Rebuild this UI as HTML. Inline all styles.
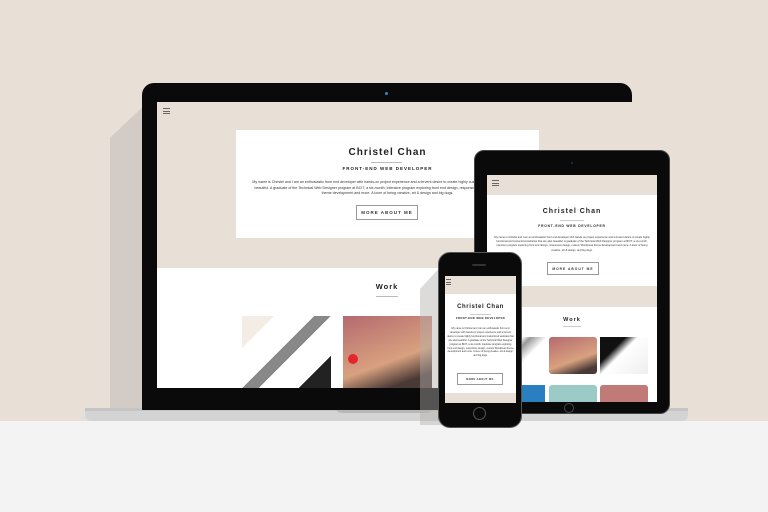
<!DOCTYPE html>
<html><head><meta charset="utf-8"><style>
*{margin:0;padding:0;box-sizing:border-box}
body{width:768px;height:512px;overflow:hidden;position:relative;background:#e8dfd7;font-family:"Liberation Sans",sans-serif;color:#222}
.a{position:absolute}
.t{text-align:center;white-space:nowrap}
.p{color:#333;text-align:center}
.btn{position:absolute;border:1px solid #999;background:#fff;font-weight:bold;letter-spacing:1px;color:#333;display:flex;align-items:center;justify-content:center}
.ham{position:absolute;width:7px;height:6px;border-top:1px solid #666;border-bottom:1px solid #666}
.ham:after{content:"";position:absolute;left:0;right:0;top:1.5px;border-top:1px solid #666}
</style></head><body>
<div class="a" style="left:0;top:421px;width:768px;height:91px;background:#f3f3f3"></div>
<div class="a" style="left:110px;top:100px;width:40px;height:315px;background:#d3ccc6;clip-path:polygon(100% 0,100% 100%,0 100%,0 12%)"></div>
<div class="a" style="left:85px;top:408px;width:603px;height:13px;background:#d4d4d4;border-radius:0 0 6px 6px"></div>
<div class="a" style="left:85px;top:408px;width:603px;height:3px;background:#c4c4c4"></div>
<div class="a" style="left:336px;top:408px;width:96px;height:5px;background:#b8b8b8;border-radius:0 0 5px 5px"></div>
<div class="a" style="left:142px;top:83px;width:490px;height:327px;background:#0a0a0a;border-radius:12px 12px 0 0"></div>
<div class="a" style="left:385px;top:92px;width:3px;height:3px;border-radius:50%;background:#2a8ad0"></div>
<div class="a" style="left:157px;top:102px;width:480px;height:286px;background:#fff;overflow:hidden">
  <div class="a" style="left:0;top:0;width:480px;height:166px;background:#e8dfd7"></div>
  <div class="ham" style="left:6px;top:6px"></div>
  <div class="a" style="left:79px;top:28px;width:303px;height:108px;background:#fff">
    <div class="a t" style="left:0;width:303px;top:17px;font-size:10px;font-weight:bold;letter-spacing:1px">Christel Chan</div>
    <div class="a" style="left:135px;top:32px;width:31px;height:1px;background:#bbb"></div>
    <div class="a t" style="left:0;width:303px;top:36px;font-size:4.5px;font-weight:bold;letter-spacing:1px">FRONT-END WEB DEVELOPER</div>
    <div class="a p" style="left:15px;width:273px;top:50px;font-size:3.6px;line-height:5.5px">My name is Christel and I am an enthusiastic front end developer with hands-on project experience and a fervent desire to create highly customized websites that are also beautiful. A graduate of the Technical Web Designer program at BCIT, a six-month, intensive program exploring front end design, responsive design, custom Wordpress theme development and more. A lover of being creative, art &amp; design and big dogs.</div>
    <div class="btn" style="left:120px;top:75px;width:62px;height:15px;font-size:4.5px">MORE ABOUT ME</div>
  </div>
  <div class="a t" style="left:180px;width:100px;top:180px;font-size:7.5px;font-weight:bold;letter-spacing:1px">Work</div>
  <div class="a" style="left:219px;top:194px;width:22px;height:1px;background:#bbb"></div>
  <div class="a" style="left:85px;top:214px;width:89px;height:72px;background:linear-gradient(135deg,#f4ede6 0 20%,#fff 20% 45%,#888 45% 55%,#fff 55% 80%,#222 80%)"></div>
  <div class="a" style="left:186px;top:214px;width:89px;height:72px;background:linear-gradient(160deg,#b56a6f,#d8a17f 60%,#4a3a36 85%)"></div>
  <div class="a" style="left:191px;top:252px;width:10px;height:10px;border-radius:50%;background:#e6262d"></div>
</div>
<div class="a" style="left:474px;top:150px;width:196px;height:264px;background:#0a0a0a;border-radius:10px;border:1px solid #444"></div>
<div class="a" style="left:571px;top:162px;width:2px;height:2px;background:#234;border-radius:50%"></div>
<div class="a" style="left:564px;top:403px;width:10px;height:10px;border:1px solid #444;border-radius:50%"></div>
<div class="a" style="left:487px;top:175px;width:170px;height:227px;background:#fff;overflow:hidden">
  <div class="a" style="left:0;top:0;width:170px;height:20px;background:#e8dfd7"></div>
  <div class="ham" style="left:5px;top:5px"></div>
  <div class="a t" style="left:0;width:170px;top:33px;font-size:7px;font-weight:bold;letter-spacing:1px">Christel Chan</div>
  <div class="a" style="left:73px;top:45px;width:24px;height:1px;background:#ccc"></div>
  <div class="a t" style="left:0;width:170px;top:49px;font-size:3.3px;font-weight:bold;letter-spacing:.8px">FRONT-END WEB DEVELOPER</div>
  <div class="a p" style="left:5px;width:160px;top:61px;font-size:2.6px;line-height:4.2px">My name is Christel and I am an enthusiastic front end developer with hands-on project experience and a fervent desire to create highly functional and customized websites that are also beautiful. A graduate of the Technical Web Designer program at BCIT, a six-month, intensive program exploring front end design, responsive design, custom Wordpress theme development and more. A lover of being creative, art &amp; design, and big dogs.</div>
  <div class="btn" style="left:60px;top:87px;width:52px;height:13px;font-size:3.3px">MORE ABOUT ME</div>
  <div class="a" style="left:0;top:111px;width:170px;height:21px;background:#e8dfd7"></div>
  <div class="a t" style="left:0;width:170px;top:142px;font-size:5.5px;font-weight:bold;letter-spacing:1px">Work</div>
  <div class="a" style="left:76px;top:151px;width:18px;height:1px;background:#ccc"></div>
  <div class="a" style="left:10px;top:162px;width:48px;height:37px;background:linear-gradient(135deg,#fff 30%,#999 40%,#fff 60%)"></div>
  <div class="a" style="left:62px;top:162px;width:48px;height:37px;border-radius:3px;background:linear-gradient(160deg,#b56a6f,#d8a17f 60%,#4a3a36 85%)"></div>
  <div class="a" style="left:113px;top:162px;width:48px;height:37px;background:linear-gradient(135deg,#111 30%,#fff 45%,#eee)"></div>
  <div class="a" style="left:10px;top:210px;width:48px;height:20px;background:#2a7fc0"></div>
  <div class="a" style="left:62px;top:210px;width:48px;height:20px;border-radius:3px;background:#9ccac7"></div>
  <div class="a" style="left:113px;top:210px;width:48px;height:20px;border-radius:3px;background:#c07a78"></div>
</div>
<div class="a" style="left:420px;top:265px;width:22px;height:160px;background:rgba(180,175,170,.45);clip-path:polygon(100% 0,100% 100%,0 100%,0 15%)"></div>
<div class="a" style="left:438px;top:252px;width:84px;height:176px;background:#0a0a0a;border-radius:12px;border:1px solid #555"></div>
<div class="a" style="left:472px;top:264px;width:14px;height:2px;background:#333;border-radius:1px"></div>
<div class="a" style="left:473px;top:407px;width:13px;height:13px;border:1px solid #555;border-radius:50%"></div>
<div class="a" style="left:445px;top:276px;width:71px;height:127px;background:#fff;overflow:hidden">
  <div class="a" style="left:0;top:0;width:71px;height:18px;background:#e8dfd7"></div>
  <div class="ham" style="left:1px;top:3px;width:5px"></div>
  <div class="a t" style="left:0;width:71px;top:28px;font-size:6px;font-weight:bold;letter-spacing:.6px">Christel Chan</div>
  <div class="a" style="left:25px;top:38px;width:21px;height:1px;background:#ccc"></div>
  <div class="a t" style="left:0;width:71px;top:41px;font-size:2.7px;font-weight:bold;letter-spacing:.4px">FRONT-END WEB DEVELOPER</div>
  <div class="a p" style="left:2px;width:67px;top:51px;font-size:2.4px;line-height:3.9px">My name is Christel and I am an enthusiastic front end developer with hands-on project experience and a fervent desire to create highly functional and customized websites that are also beautiful. A graduate of the Technical Web Designer program at BCIT, a six-month, intensive program exploring front end design, responsive design, custom Wordpress theme development and more. A lover of being creative, art &amp; design, and big dogs.</div>
  <div class="btn" style="left:12px;top:97px;width:46px;height:12px;font-size:2.6px;letter-spacing:.4px">MORE ABOUT ME</div>
  <div class="a" style="left:0;top:117px;width:71px;height:10px;background:#e8dfd7"></div>
</div>
</body></html>
